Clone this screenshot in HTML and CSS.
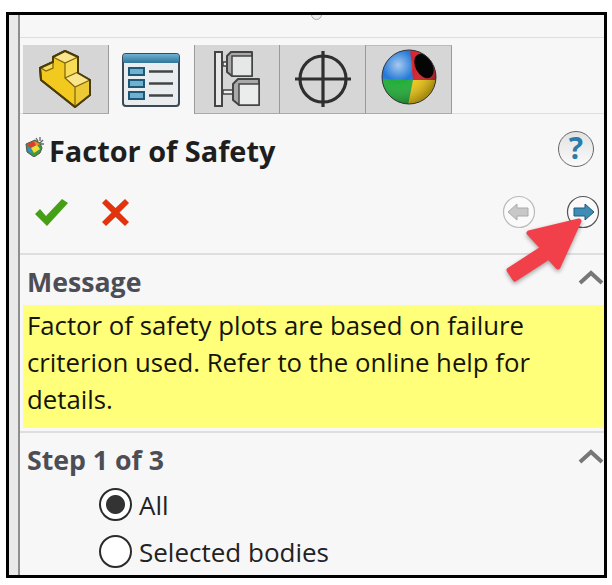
FILE: index.html
```html
<!DOCTYPE html>
<html lang="en">
<head>
    <meta charset="UTF-8">
    <title>Factor of Safety</title>
    <link rel="stylesheet" href="styles.css">
</head>
<body>
    <div class="frame">
        <div class="strip"></div>
        <div class="panel">
            <div class="topbar"><span class="grip"></span></div>

            <div class="tabs">
                <div class="tab">
                    <svg width="54" height="60" viewBox="40 49 54 60">
                        <path d="M43 80 L42 68 L55 62 L55 57 L67 51 L80 57 L80 73 L92 80 L92 95 L77 107 Z" fill="#f2c91f" stroke="#4a3c08" stroke-width="2" stroke-linejoin="round"/>
                        <path d="M55 57 L67 51 L80 57 L67 63 Z" fill="#fbe58a"/>
                        <path d="M67 78 L80 72 L92 80 L77 87 Z" fill="#fbe58a"/>
                        <path d="M67 63 L80 57 L80 72 L67 78 Z" fill="#f8dc55"/>
                        <path d="M77 87 L92 80 L92 95 L77 107 Z" fill="#ecca35"/>
                        <path d="M42 68 L48 71 L55 68 L55 62 Z" fill="#f8dc55"/>
                        <path d="M55 57 L67 63 L80 57 M67 63 V78 L77 87 L92 80 M77 87 V107 M67 78 L80 72 M55 57 V68 L48 71 L43 68" stroke="#7a6210" stroke-width="1.2" fill="none"/>
                        <path d="M43 80 L42 68 L55 62 L55 57 L67 51 L80 57 L80 73 L92 80 L92 95 L77 107 Z" fill="none" stroke="#4a3c08" stroke-width="2" stroke-linejoin="round"/>
                    </svg>
                </div>
                <div class="tab tab-active">
                    <svg width="58" height="54" viewBox="0 0 58 54">
                        <defs>
                            <linearGradient id="header" x1="0" y1="0" x2="0" y2="1">
                                <stop offset="0" stop-color="#6db2d3"/>
                                <stop offset="1" stop-color="#2f7399"/>
                            </linearGradient>
                        </defs>
                        <rect x="1" y="1" width="56" height="52" rx="3" fill="#e9edf0" stroke="#3b4a55" stroke-width="2"/>
                        <rect x="1" y="1" width="56" height="9" rx="2" fill="url(#header)"/>
                        <rect x="7" y="15" width="15" height="7" fill="#6cb1d1" stroke="#1f5876" stroke-width="2"/>
                        <rect x="7" y="27" width="15" height="7" fill="#6cb1d1" stroke="#1f5876" stroke-width="2"/>
                        <rect x="7" y="39" width="15" height="7" fill="#6cb1d1" stroke="#1f5876" stroke-width="2"/>
                        <path d="M27 18.500 H51 M27 30.500 H51 M27 42.500 H51" stroke="#444" stroke-width="2.400"/>
                    </svg>
                </div>
                <div class="tab">
                    <svg width="50" height="58" viewBox="0 0 50 58">
                        <rect x="11" y="12" width="6" height="4" fill="#eee" stroke="#444" stroke-width="1.500"/>
                        <rect x="11" y="40" width="12" height="4" fill="#eee" stroke="#444" stroke-width="1.500"/>
                        <rect x="3" y="2" width="7" height="54" fill="#e8e8e8" stroke="#444" stroke-width="2"/>
                        <path d="M15 6 L19 2 H40 V26 H20 L15 22 Z" fill="#a9a9a9" stroke="#444" stroke-width="2" stroke-linejoin="round"/>
                        <rect x="20" y="6" width="20" height="20" fill="#e6e8e8" stroke="#444" stroke-width="1.500"/>
                        <path d="M21 34 L26 29 H47 V55 H27 L21 50 Z" fill="#a9a9a9" stroke="#444" stroke-width="2" stroke-linejoin="round"/>
                        <rect x="27" y="34" width="20" height="21" fill="#ebeded" stroke="#444" stroke-width="1.500"/>
                    </svg>
                </div>
                <div class="tab">
                    <svg width="58" height="58" viewBox="0 0 58 58">
                        <circle cx="29" cy="29" r="23" fill="none" stroke="#2f2f2f" stroke-width="3.200"/>
                        <path d="M29 1 V57 M1 29 H57" stroke="#2f2f2f" stroke-width="3.200"/>
                    </svg>
                </div>
                <div class="tab">
                    <svg class="ball" width="56" height="56" viewBox="0 0 56 56">
                        <defs>
                            <clipPath id="ballclip"><circle cx="28" cy="28" r="27"/></clipPath>
                            <radialGradient id="shine" cx="0.3" cy="0.28" r="0.75">
                                <stop offset="0" stop-color="#fff" stop-opacity="0.6"/>
                                <stop offset="0.4" stop-color="#fff" stop-opacity="0"/>
                                <stop offset="1" stop-color="#000" stop-opacity="0.3"/>
                            </radialGradient>
                        </defs>
                        <g clip-path="url(#ballclip)">
                            <rect width="56" height="56" fill="#2379d8"/>
                            <path d="M0 30 L32 31 L27 56 L0 56 Z" fill="#22ad38"/>
                            <path d="M32 31 L56 31 L56 56 L27 56 Z" fill="#f0c914"/>
                            <path d="M29 0 L56 0 L56 31 L32 31 Z" fill="#d3222c"/>
                        </g>
                        <circle cx="28" cy="28" r="27" fill="url(#shine)"/>
                        <ellipse cx="43" cy="17" rx="8.500" ry="13" transform="rotate(-28 43 17)" fill="#050505"/>
                        <circle cx="28" cy="28" r="27" fill="none" stroke="#333" stroke-width="1"/>
                    </svg>
                </div>
            </div>

            <div class="title-row">
                <h1 class="title">
                    <svg width="20" height="20" viewBox="0 0 20 20">
                        <path d="M11 1 L13 4 M15 0 L15 4 M18 3 L15 6 M19 7 L16 7" stroke="#666" stroke-width="1.300"/>
                        <path d="M1 7 L10 3 L15 6 L17 11 L15 16 L9 20 L2 15 Z" fill="#3f9a3c" stroke="#555" stroke-width="1"/>
                        <path d="M2 7 L9 4 L11 8 L5 11 Z" fill="#e23a2c"/>
                        <path d="M9 4 L15 7 L11 9 Z" fill="#f08a24"/>
                        <path d="M6 11 L12 8 L15 12 L9 16 Z" fill="#f3dc3c"/>
                        <path d="M3 10 L6 12 L8 17 L3 14 Z" fill="#2f8fd0"/>
                    </svg>
                    Factor of Safety
                </h1>
                <div class="help">?</div>
            </div>

            <div class="action-row">
                <svg width="36" height="30" viewBox="0 0 36 30">
                    <path d="M2 17 L7 12 L13 19 L29 2 L35 6 L14 29 Z" fill="#45a015"/>
                </svg>
                <svg width="29" height="29" viewBox="0 0 29 29">
                    <path d="M5 1 L14.500 10 L24 1 L28 5 L18.500 14.500 L28 24 L24 28 L14.500 19 L5 28 L1 24 L10.500 14.500 L1 5 Z" fill="#e2330f"/>
                </svg>
                <div class="nav">
                    <svg width="34" height="34" viewBox="0 0 34 34">
                        <circle cx="17" cy="17" r="15.500" fill="#fafafa" stroke="#bbb" stroke-width="1.200"/>
                        <path d="M6 17 L15 9 V13 H26 V21 H15 V25 Z" fill="#c8c8c8" stroke="#aaa" stroke-width="1"/>
                    </svg>
                    <svg width="34" height="34" viewBox="0 0 34 34">
                        <circle cx="17" cy="17" r="15.500" fill="#fafafa" stroke="#555" stroke-width="1.200"/>
                        <path d="M28 17 L19 9 V13 H8 V21 H19 V25 Z" fill="#3f8db5" stroke="#1e5a7a" stroke-width="1"/>
                    </svg>
                </div>
            </div>

            <section class="group group-message">
                <div class="group-head">
                    <h2>Message</h2>
                    <svg class="caret" width="26" height="15" viewBox="0 0 26 15"><path d="M2 13 L13 3 L24 13" fill="none" stroke="#777" stroke-width="4"/></svg>
                </div>
                <p class="message">Factor of safety plots are based on failure criterion used. Refer to the online help for details.</p>
            </section>

            <section class="group group-step">
                <div class="group-head">
                    <h2>Step 1 of 3</h2>
                    <svg class="caret" width="26" height="15" viewBox="0 0 26 15"><path d="M2 13 L13 3 L24 13" fill="none" stroke="#777" stroke-width="4"/></svg>
                </div>
                <div class="option"><span class="radio radio-on"></span>All</div>
                <div class="option"><span class="radio"></span>Selected bodies</div>
            </section>
        </div>

        <svg class="pointer" width="78" height="72" viewBox="0 0 78 72">
            <path d="M74 8 L53 54 L44 44 L10 66 L4 57 L38 35 L24 20 Z" fill="#f2404a" stroke="#f2404a" stroke-width="5" stroke-linejoin="round"/>
        </svg>
    </div>
</body>
</html>
```

FILE: styles.css
```css
html, body {
    margin: 0;
    padding: 0;
    background: white;
}
body {
    font-family: "Open Sans", "Noto Sans", sans-serif;
    color: #1c1c1c;
    padding: 12px 0 0 6px;
}
.frame {
    position: relative;
    display: flex;
    box-sizing: border-box;
    width: 601px;
    height: 566px;
    border: 3px solid black;
    overflow: hidden;
    background: #e9e9e9;
}
.strip {
    width: 9px;
    flex: none;
}
.panel {
    flex: 1;
    min-width: 0;
    background: #f7f7f7;
    border-left: 2px solid #8e8e8e;
}
.topbar {
    position: relative;
    height: 22px;
    border-bottom: 1px solid #dedede;
}
.grip {
    position: absolute;
    left: 291px;
    top: -6px;
    width: 9px;
    height: 9px;
    border: 1px solid #aaa;
    border-radius: 50%;
    background: #eee;
}
.tabs {
    display: flex;
    margin-top: 7px;
    padding-left: 3px;
    height: 68px;
    border-bottom: 1px solid #dedede;
}
.tab {
    box-sizing: border-box;
    width: 85.800px;
    height: 69px;
    background: #d6d6d6;
    border-right: 1px solid #9a9a9a;
    border-bottom: 1px solid #aaa;
    display: flex;
    align-items: center;
    justify-content: center;
}
.tab svg {
    filter: blur(0.4px);
}
.tab:last-child {
    border-top: 1px solid #bbb;
}
.tab-active {
    background: #f7f7f7;
    border-bottom: none;
}
.ball {
    margin-bottom: 6px;
}
.title-row {
    display: flex;
    align-items: center;
    justify-content: space-between;
    height: 36px;
    margin-top: 17px;
    padding: 0 10px 0 5px;
}
.title {
    display: flex;
    align-items: center;
    gap: 4px;
    margin: 2px 0 0;
    font-size: 28.900px;
    font-weight: 700;
    color: #1e1e1e;
}
.title svg {
    margin-bottom: 6px;
}
.help {
    box-sizing: border-box;
    width: 36px;
    height: 36px;
    border: 1.500px solid #666;
    border-radius: 50%;
    background: linear-gradient(#e2e2e2, #fafafa);
    font-size: 30px;
    font-weight: 700;
    line-height: 32px;
    text-align: center;
    color: #2a7bab;
}
.action-row {
    display: flex;
    align-items: center;
    height: 40px;
    margin-top: 25px;
    padding-left: 13px;
    padding-right: 4px;
    gap: 32px;
}
.nav {
    display: flex;
    gap: 30px;
    margin-left: auto;
}
.group {
    border-top: 2px solid #dedede;
}
.group-message {
    margin-top: 21px;
}
.group-head {
    display: flex;
    align-items: center;
    justify-content: space-between;
    box-sizing: border-box;
    height: 50px;
    padding-top: 3px;
    padding-left: 7px;
}
.group-head h2 {
    margin: 0;
    font-size: 26.700px;
    font-weight: 700;
    color: #4d4d55;
}
.caret {
    margin-bottom: 8px;
}
.message {
    margin: 0 0 0 3px;
    height: 123px;
    box-sizing: border-box;
    padding: 2px 20px 0 4px;
    background: #ffff7a;
    font-size: 25.750px;
    line-height: 37px;
    color: #14140a;
}
.group-step {
    margin-top: 3px;
}
.group-step .group-head {
    height: 48px;
    padding-top: 4px;
}
.group-step .caret {
    margin-bottom: 5px;
}
.option {
    display: flex;
    align-items: center;
    gap: 7px;
    height: 47px;
    padding-left: 79px;
    font-size: 26px;
    color: #222;
}
.radio {
    box-sizing: border-box;
    width: 33px;
    height: 33px;
    border: 2px solid #2b2b2b;
    border-radius: 50%;
    background: white;
}
.radio-on {
    background: radial-gradient(circle, #333 0 9px, white 10px);
}
.pointer {
    position: absolute;
    left: 496px;
    top: 198px;
    filter: drop-shadow(0 2px 2px rgba(0, 0, 0, 0.35));
}
```
